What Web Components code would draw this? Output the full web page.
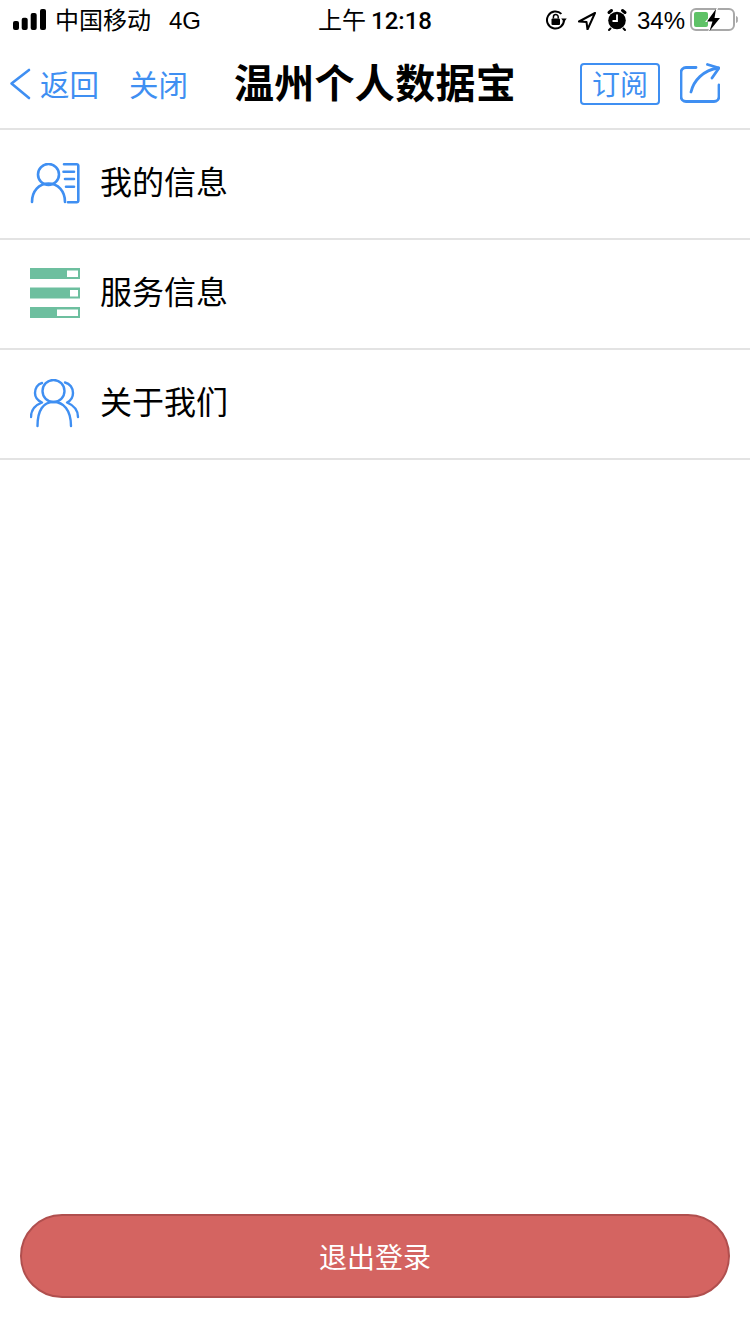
<!DOCTYPE html>
<html lang="zh-CN">
<head>
<meta charset="utf-8">
<title>温州个人数据宝</title>
<style>
html,body{margin:0;padding:0;background:#fff;}
body{font-family:"Liberation Sans","Noto Sans CJK SC",sans-serif;}
</style>
</head>
<body>
<app-shell>
  <status-bar slot="top"></status-bar>
  <nav-bar slot="top" title="温州个人数据宝"></nav-bar>
  <menu-row slot="top" icon="info">我的信息</menu-row>
  <menu-row slot="top" icon="service">服务信息</menu-row>
  <menu-row slot="top" icon="about">关于我们</menu-row>
  <logout-button slot="bottom">退出登录</logout-button>
</app-shell>

<script>
'use strict';

const iconos = {
  info: `<svg width="50" height="42" viewBox="0 0 50 42" fill="none" stroke="#3f8ff2" stroke-width="2.600" stroke-linecap="round" stroke-linejoin="round">
    <circle cx="18.500" cy="11.500" r="10.500"/>
    <path d="M2 39c0-11 7-18.500 16.500-18.500S35 28 35 39"/>
    <path d="M34 1.300h12.800a1.500 1.500 0 0 1 1.500 1.500v35a1.500 1.500 0 0 1-1.500 1.500H38"/>
    <path d="M33.500 8.700H44M35 16h9M36 23.700h8"/>
  </svg>`,
  service: `<svg width="50" height="52" viewBox="0 0 50 52">
    <rect y="0" width="50" height="11" fill="#6dbf9f"/><rect x="37" y="2.500" width="11" height="6.500" fill="#fff"/>
    <rect y="19.500" width="50" height="11" fill="#6dbf9f"/><rect x="40" y="22" width="8" height="6.500" fill="#fff"/>
    <rect y="39" width="50" height="11" fill="#6dbf9f"/><rect x="27" y="41.500" width="21" height="6.500" fill="#fff"/>
  </svg>`,
  about: `<svg width="50" height="50" viewBox="0 0 50 50" fill="none" stroke="#3f8ff2" stroke-width="2.400" stroke-linecap="round" stroke-linejoin="round">
    <circle cx="23.500" cy="12" r="11"/>
    <path d="M7.500 47c0-16 6-24 16-24s17.500 8 17.500 24"/>
    <path d="M12 4C7.500 5 5 9.500 5 14c0 4 2.500 7.500 7 9.500C5.500 26 1 31 1 38"/>
    <path d="M35 3.500c5 1 8 5.500 8 10.500 0 4-2 7.500-6 9.500C43 26 48 31 48 38"/>
  </svg>`,
};

class StatusBar extends HTMLElement {
  constructor() {
    super();
    this.attachShadow({ mode: 'open' });
    this.shadowRoot.innerHTML = `
    <style>
    :host{display:grid;grid-template-columns:1fr auto 1fr;align-items:center;height:40px;font-size:24px;color:#000;}
    .izq,.der,.hora{display:flex;align-items:center;}
    .izq{padding-left:13px;}
    .der{justify-content:flex-end;padding-right:11px;}
    .barras{margin-right:9px;display:block;}
    .cjk{margin-bottom:4px;}
    .red{margin-left:18px;margin-top:2px;}
    .hora b{font:500 24px Roboto,sans-serif;margin-left:5px;margin-top:2px;}
    svg{display:block;}
    .por{margin:2px 5px 0 9px;}
    </style>
    <div class="izq">
      <svg class="barras" width="33" height="22" viewBox="0 0 33 22" fill="#000">
        <rect x="0" y="12" width="6" height="9" rx="2"/>
        <rect x="8.700" y="8.700" width="6" height="12.300" rx="2"/>
        <rect x="17.700" y="4" width="6" height="17" rx="2"/>
        <rect x="27" y="0" width="6" height="21" rx="2"/>
      </svg>
      <span class="cjk">中国移动</span><span class="red">4G</span>
    </div>
    <div class="hora"><span class="cjk">上午</span><b>12:18</b></div>
    <div class="der">
      <svg width="22" height="22" viewBox="0 0 22 22" style="margin-right:10px">
        <path d="M19 11a8.500 8.500 0 1 1-2.600-6.100" fill="none" stroke="#000" stroke-width="2"/>
        <path d="M21.800 9.500l-2.800 3.500-2.800-3.500z" fill="#000"/>
        <rect x="6.500" y="9.500" width="8.500" height="6.500" rx="1" fill="#000"/>
        <path d="M8.400 9.500V8a2.400 2.400 0 0 1 4.800 0v1.500" fill="none" stroke="#000" stroke-width="1.500"/>
      </svg>
      <svg width="20" height="20" viewBox="0 0 20 20" style="margin-right:9px">
        <path d="M18 3L2 11.500l7.500 .5 1 7.500z" fill="none" stroke="#000" stroke-width="2" stroke-linejoin="round"/>
      </svg>
      <svg width="22" height="24" viewBox="0 0 22 24">
        <circle cx="11" cy="12.500" r="8.800" fill="#000"/>
        <path d="M3 4.500l2.500-2M19 4.500l-2.500-2" stroke="#000" stroke-width="3" stroke-linecap="round"/>
        <path d="M4.500 20.500l-1.500 1.500M17.500 20.500l1.500 1.500" stroke="#000" stroke-width="2" stroke-linecap="round"/>
        <path d="M11 6.500v6.500H6.500" fill="none" stroke="#fff" stroke-width="1.800"/>
      </svg>
      <span class="por">34%</span>
      <svg width="49" height="24" viewBox="0 0 49 24">
        <rect x="1" y="1" width="43" height="21" rx="5" fill="none" stroke="#a8a8a8" stroke-width="2"/>
        <rect x="4" y="4" width="14" height="15" rx="2" fill="#5fc267"/>
        <path d="M27 0L15 14h6l-3 10 13-15h-6l3-9z" fill="#fff"/>
        <path d="M26 1L17 13.500h5.500L19.500 23 30 10h-5.500L26 1z" fill="#000"/>
        <path d="M46 8v7a3 3 0 0 0 1.800-3.500A3 3 0 0 0 46 8z" fill="#a8a8a8"/>
      </svg>
    </div>`;
  }
}

class NavBar extends HTMLElement {
  constructor() {
    super();
    this.attachShadow({ mode: 'open' });
    this.shadowRoot.innerHTML = `
    <style>
    :host{display:grid;grid-template-columns:1fr auto 1fr;align-items:center;height:88px;border-bottom:2px solid #e3e3e3;color:#3f8ff2;}
    .izq{display:flex;align-items:center;font-size:29.500px;padding-left:9px;}
    .izq svg{margin-right:9px;}
    .izq span{margin-bottom:3px;}
    .cerrar{margin-left:30px;}
    h1{margin:0;font-size:40px;font-weight:700;color:#000;line-height:1;letter-spacing:.3px;}
    .der{display:flex;align-items:center;justify-content:flex-end;padding-right:30px;}
    .sub{box-sizing:border-box;width:80px;height:42px;border:2px solid #3f8ff2;border-radius:4px;font-size:28px;line-height:42px;text-align:center;margin-right:20px;}
    svg{display:block;}
    </style>
    <div class="izq">
      <svg width="22" height="34" viewBox="0 0 22 34" fill="none" stroke="#3f8ff2" stroke-width="2.600" stroke-linecap="round" stroke-linejoin="round"><path d="M20 3L2.500 16.500 20 31"/></svg>
      <span>返回</span><span class="cerrar">关闭</span>
    </div>
    <h1></h1>
    <div class="der">
      <span class="sub">订阅</span>
      <svg width="40" height="42" viewBox="0 0 40 42" fill="none" stroke="#3f8ff2" stroke-width="2.800" stroke-linecap="round" stroke-linejoin="round">
        <path d="M16 4.500H6a5 5 0 0 0-5 5v24a5 5 0 0 0 5 5h28a5 5 0 0 0 5-5V22"/>
        <path d="M11 29C13.500 18 23 7 38.500 5"/>
        <path d="M27.500 1.500L39 5 32 15"/>
      </svg>
    </div>`;
    this.shadowRoot.querySelector('h1').textContent = this.getAttribute('title');
  }
}

class MenuRow extends HTMLElement {
  constructor() {
    super();
    this.attachShadow({ mode: 'open' });
    this.shadowRoot.innerHTML = `
    <style>
    :host{display:flex;align-items:center;height:108px;border-bottom:2px solid #e3e3e3;padding-left:30px;font-size:32px;color:#000;}
    .ico{width:50px;margin-right:20px;display:flex;}
    .txt{margin-bottom:8px;}
    </style>
    <span class="ico"></span><span class="txt"><slot></slot></span>`;
    this.shadowRoot.querySelector('.ico').innerHTML = iconos[this.getAttribute('icon')];
  }
}

class LogoutButton extends HTMLElement {
  constructor() {
    super();
    this.attachShadow({ mode: 'open' });
    this.shadowRoot.innerHTML = `
    <style>
    :host{display:flex;align-items:center;justify-content:center;box-sizing:border-box;height:84px;margin:0 20px;background:#d46461;border:2px solid #b04f4e;border-radius:42px;color:#fff;font-size:28px;}
    </style>
    <slot></slot>`;
  }
}

class AppShell extends HTMLElement {
  constructor() {
    super();
    this.attachShadow({ mode: 'open' });
    this.shadowRoot.innerHTML = `
    <style>
    :host{display:flex;flex-direction:column;justify-content:space-between;height:1334px;padding-bottom:36px;box-sizing:border-box;background:#fff;}
    .arriba{display:flex;flex-direction:column;}
    </style>
    <div class="arriba"><slot name="top"></slot></div>
    <slot name="bottom"></slot>`;
  }
}

customElements.define('status-bar', StatusBar);
customElements.define('nav-bar', NavBar);
customElements.define('menu-row', MenuRow);
customElements.define('logout-button', LogoutButton);
customElements.define('app-shell', AppShell);
</script>
</body>
</html>
